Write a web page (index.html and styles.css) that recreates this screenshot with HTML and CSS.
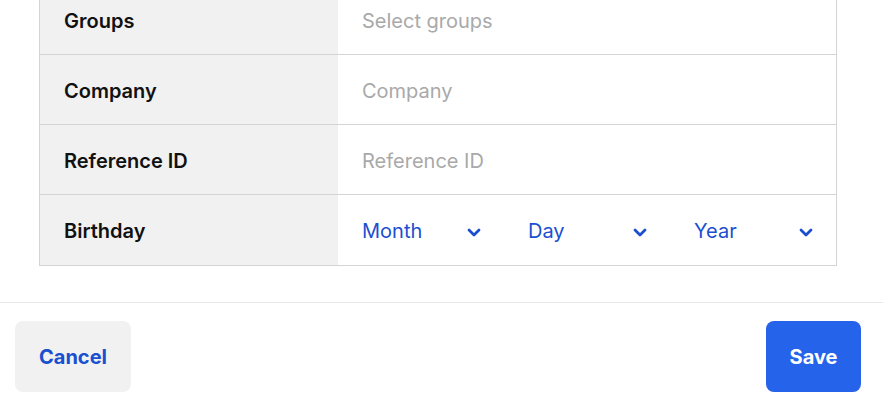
FILE: index.html
```html
<!DOCTYPE html>
<html lang="en">
<head>
<meta charset="utf-8">
<title>Contact form</title>
<link rel="stylesheet" href="styles.css">
</head>
<body>
<div class="page">
  <div class="form-wrap">
    <div class="table">
      <div class="row">
        <div class="label">Groups</div>
        <div class="value placeholder">Select groups</div>
      </div>
      <div class="row">
        <div class="label">Company</div>
        <div class="value placeholder">Company</div>
      </div>
      <div class="row">
        <div class="label">Reference ID</div>
        <div class="value placeholder">Reference ID</div>
      </div>
      <div class="row">
        <div class="label">Birthday</div>
        <div class="value selects">
          <div class="select"><span>Month</span><svg class="chev" viewBox="0 0 14 9" width="14" height="9"><path d="M2 2l5 5 5-5" fill="none" stroke="currentColor" stroke-width="2.8" stroke-linecap="round" stroke-linejoin="round"/></svg></div>
          <div class="select"><span>Day</span><svg class="chev" viewBox="0 0 14 9" width="14" height="9"><path d="M2 2l5 5 5-5" fill="none" stroke="currentColor" stroke-width="2.8" stroke-linecap="round" stroke-linejoin="round"/></svg></div>
          <div class="select"><span>Year</span><svg class="chev" viewBox="0 0 14 9" width="14" height="9"><path d="M2 2l5 5 5-5" fill="none" stroke="currentColor" stroke-width="2.8" stroke-linecap="round" stroke-linejoin="round"/></svg></div>
        </div>
      </div>
    </div>
  </div>
  <div class="footer">
    <button class="btn btn-cancel">Cancel</button>
    <button class="btn btn-save">Save</button>
  </div>
</div>
</body>
</html>
```
FILE: styles.css
```css
* { box-sizing: border-box; }
html, body { margin: 0; padding: 0; background: #fff; }
body {
  font-family: Inter, "Noto Sans", "Liberation Sans", sans-serif;
  color: #111;
  overflow: hidden;
}
.page { margin-top: -16px; }
.form-wrap { padding: 0 46px 0 39px; }
.table {
  border: 1px solid #d4d4d4;
}
.row {
  display: grid;
  grid-template-columns: 298px 1fr;
  height: 70px;
  border-bottom: 1px solid #d4d4d4;
}
.row:last-child { border-bottom: none; }
.label {
  background: #f1f1f1;
  display: flex;
  align-items: center;
  padding: 2px 0 0 24px;
  font-size: 20px;
  font-weight: 600;
  color: #111;
}
.value {
  display: flex;
  align-items: center;
  padding: 2px 0 0 24px;
  font-size: 20px;
}
.placeholder { color: #a9a9a9; }
.selects { gap: 24px; }
.select {
  width: 142px;
  display: flex;
  align-items: center;
  justify-content: space-between;
  padding-right: 23px;
  color: #1c4fcf;
}
.chev { display: block; margin-top: 2px; }
.footer {
  margin-top: 36px;
  border-top: 1px solid #e8e8e8;
  display: flex;
  justify-content: space-between;
  padding: 18px 22px 0 15px;
}
.btn {
  height: 71px;
  border: none;
  border-radius: 8px;
  font-family: Inter, "Noto Sans", "Liberation Sans", sans-serif;
  font-size: 20px;
  font-weight: 700;
  cursor: pointer;
}
.btn-cancel {
  width: 116px;
  background: #f1f1f1;
  color: #1a4fcf;
}
.btn-save {
  width: 95px;
  background: #2563eb;
  color: #fff;
}
```
